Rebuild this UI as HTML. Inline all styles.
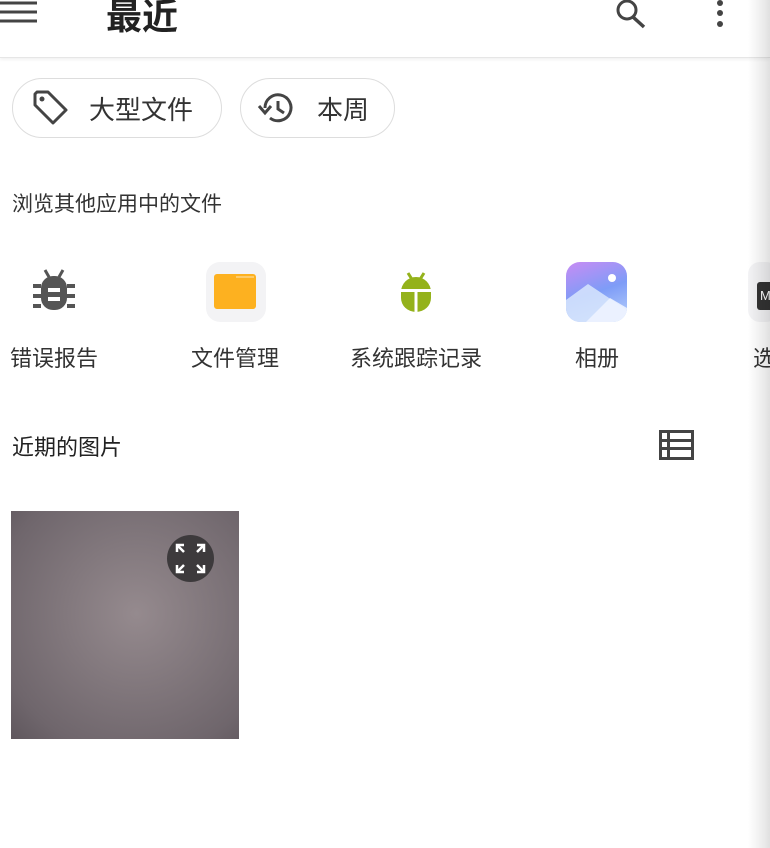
<!DOCTYPE html>
<html><head><meta charset="utf-8"><style>
*{margin:0;padding:0;box-sizing:border-box}
body{width:770px;height:848px;background:#fff;position:relative;overflow:hidden;font-family:"Liberation Sans","Noto Sans CJK SC",sans-serif;color:#222}
.a{position:absolute}
.hdr{left:0;top:0;width:770px;height:58px;background:#fff;border-bottom:1px solid #e6e6e6;box-shadow:0 2px 3px rgba(0,0,0,0.05)}
.chip{position:absolute;top:78px;height:60px;border:1.5px solid #ddd;border-radius:30px;font-size:26px;display:flex;align-items:center;color:#333}
.lbl{position:absolute;top:341px;font-size:22px;color:#333;text-align:center;width:180px;margin-left:-90px;white-space:nowrap}
.edge{right:0;top:0;width:22px;height:848px;background:linear-gradient(to right,rgba(0,0,0,0),rgba(0,0,0,0.08) 70%,rgba(0,0,0,0.12))}
</style></head><body>
<div class="a hdr"></div>
<svg class="a" style="left:0;top:0" width="40" height="26"><g stroke="#444" stroke-width="3"><line x1="0" y1="3" x2="37" y2="3"/><line x1="0" y1="12" x2="37" y2="12"/><line x1="0" y1="21" x2="37" y2="21"/></g></svg>
<div class="a" style="left:106px;top:-12px;font-size:36px;font-weight:bold;color:#222">最近</div>
<svg class="a" style="left:610px;top:0" width="40" height="30"><circle cx="17" cy="10" r="9" fill="none" stroke="#444" stroke-width="3"/><line x1="23" y1="17" x2="34" y2="27" stroke="#444" stroke-width="3.5"/></svg>
<svg class="a" style="left:712px;top:0" width="16" height="30"><circle cx="8" cy="3" r="3" fill="#444"/><circle cx="8" cy="13" r="3" fill="#444"/><circle cx="8" cy="24" r="3" fill="#444"/></svg>

<div class="chip" style="left:12px;width:210px"><svg style="margin-left:18px" width="40" height="40" viewBox="0 0 40 40"><path d="M4 6 L4 17 L22 35 L35 22 L17 4 L6 4 Z" fill="none" stroke="#444" stroke-width="3" stroke-linejoin="round"/><circle cx="11" cy="11" r="2.5" fill="#444"/></svg><span style="margin-left:18px">大型文件</span></div>
<div class="chip" style="left:240px;width:155px"><svg style="margin-left:16px" width="40" height="40" viewBox="0 0 40 40"><path d="M8 20 A13 13 0 1 1 13 30" fill="none" stroke="#444" stroke-width="3"/><path d="M2 18 L8 25 L14 18" fill="none" stroke="#444" stroke-width="3"/><path d="M21 13 L21 21 L27 25" fill="none" stroke="#444" stroke-width="3"/></svg><span style="margin-left:20px">本周</span></div>

<div class="a" style="left:12px;top:188px;font-size:21px;color:#333">浏览其他应用中的文件</div>

<svg class="a" style="left:32px;top:268px" width="44" height="48" viewBox="0 0 44 48"><g fill="#555"><rect x="9" y="8" width="26" height="34" rx="12"/><rect x="1" y="16" width="8" height="4"/><rect x="35" y="16" width="8" height="4"/><rect x="1" y="26" width="8" height="4"/><rect x="35" y="26" width="8" height="4"/><rect x="1" y="36" width="8" height="4"/><rect x="35" y="36" width="8" height="4"/><path d="M13 2 L17 9 M31 2 L27 9" stroke="#555" stroke-width="3"/></g><rect x="16" y="20" width="12" height="4" fill="#fff"/><rect x="16" y="29" width="12" height="4" fill="#fff"/></svg>
<div class="a" style="left:206px;top:262px;width:60px;height:60px;border-radius:14px;background:#f3f3f5"></div>
<div class="a" style="left:214px;top:274px;width:42px;height:35px;background:#fdb120;border-radius:3px"></div>
<div class="a" style="left:236px;top:276px;width:18px;height:2px;background:#fff5"></div>
<svg class="a" style="left:396px;top:270px" width="40" height="44" viewBox="0 0 40 44"><path d="M5 22 A15 15 0 0 1 35 22 L35 28 A15 14 0 0 1 5 28 Z" fill="#94b21b"/><path d="M12 3 L17 11 M28 3 L23 11" stroke="#94b21b" stroke-width="3"/><rect x="5" y="19" width="30" height="3" fill="#fff"/><rect x="18.5" y="19" width="3" height="24" fill="#fff"/></svg>
<div class="a" style="left:566px;top:262px;width:61px;height:60px;border-radius:14px;background:linear-gradient(160deg,#c88cf4,#7e9cf7 50%,#b9d3fb);overflow:hidden"><svg width="61" height="60"><path d="M0 38 L22 22 L61 48 L61 60 L0 60Z" fill="#d8e6fd" opacity=".85"/><path d="M20 60 L44 36 L61 46 L61 60Z" fill="#edf3ff" opacity=".9"/><circle cx="46" cy="16" r="4" fill="#fff"/></svg></div>
<div class="a" style="left:748px;top:262px;width:30px;height:60px;border-radius:12px;background:#f3f3f5"></div>
<div class="a" style="left:757px;top:282px;width:20px;height:28px;background:#333;border-radius:3px;color:#fff;font-size:13px;padding-left:3px;padding-top:6px">M</div>

<div class="lbl" style="left:54px">错误报告</div>
<div class="lbl" style="left:235px">文件管理</div>
<div class="lbl" style="left:416px">系统跟踪记录</div>
<div class="lbl" style="left:597px">相册</div>
<div class="a" style="left:753px;top:341px;font-size:22px;color:#333">选</div>

<div class="a" style="left:12px;top:430px;font-size:22px;color:#222">近期的图片</div>
<svg class="a" style="left:659px;top:430px" width="36" height="30" viewBox="0 0 36 30"><rect x="1.5" y="1.5" width="32" height="27" fill="none" stroke="#444" stroke-width="3"/><g fill="#444"><rect x="1" y="9" width="33" height="3"/><rect x="1" y="17" width="33" height="3"/><rect x="8" y="1" width="3" height="28"/></g></svg>

<div class="a" style="left:11px;top:511px;width:228px;height:228px;background:radial-gradient(ellipse at 55% 45%,#958a8e,#6f666c 80%,#5f575d)"></div>
<div class="a" style="left:167px;top:535px;width:47px;height:47px;border-radius:50%;background:#3d3a3c"></div>
<svg class="a" style="left:174px;top:542px" width="33" height="33" viewBox="0 0 33 33"><g stroke="#fff" stroke-width="2.5" fill="none"><path d="M3 10 V3 H10 M3 3 L10 10"/><path d="M23 3 H30 V10 M30 3 L23 10"/><path d="M3 23 V30 H10 M3 30 L10 23"/><path d="M30 23 V30 H23 M30 30 L23 23"/></g></svg>

<div class="a edge"></div>
</body></html>
